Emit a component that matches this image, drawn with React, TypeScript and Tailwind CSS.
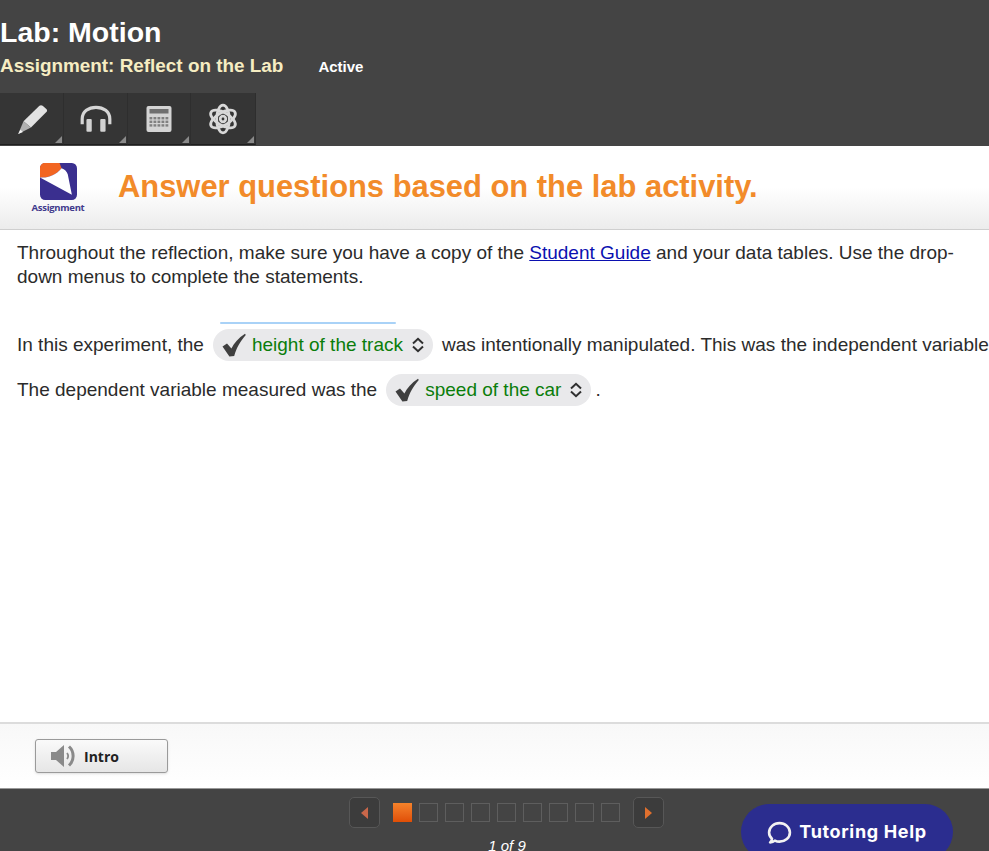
import { ReactNode } from "react";

const sans = "font-['Liberation_Sans',Arial,sans-serif]";

function Check() {
  return (
    <svg viewBox="0 0 24 24" className="w-[24px] h-[24px] shrink-0">
      <path d="M0.5 13.5 L5 10.5 L9.4 15.6 C12 10 16.5 5 23 0.8 L23.8 2 C18 8.5 14.5 15 12.2 23 L7.4 23.4 Z" fill="#3f3f3f" />
    </svg>
  );
}

function Updown() {
  return (
    <svg viewBox="0 0 14 16" className="w-[14px] h-[16px] shrink-0" fill="none" stroke="#2f2f2f" strokeWidth="2">
      <path d="M2 6.5 L7 1.8 L12 6.5" />
      <path d="M2 9.5 L7 14.2 L12 9.5" />
    </svg>
  );
}

function Answer({ children, className }: { children: ReactNode; className: string }) {
  return (
    <span className={`inline-flex items-center h-[32px] rounded-full bg-[#e9e9eb] pl-[9px] ${className}`}>
      <Check />
      <span className="text-[#0a7d0a] ml-[6px] mr-[8px]">{children}</span>
      <Updown />
    </span>
  );
}

function Tool({ children, width }: { children: ReactNode; width: string }) {
  return (
    <div className={`relative h-[52px] flex items-center justify-center bg-[#353535] border-b border-r border-b-[#1f1f1f] border-r-[#2e2e2e] ${width}`}>
      {children}
      <span className="absolute right-[1px] bottom-[1px] w-0 h-0 border-l-[7px] border-l-transparent border-b-[7px] border-b-[#8a8a8a]" />
    </div>
  );
}

function Pencil() {
  return (
    <svg viewBox="0 0 32 32" className="w-[34px] h-[34px]">
      <path d="M8 18 L23 3.5 C24 2.8 25 2.8 26 3.6 L29.5 6.5 C30.4 7.5 30.4 8.6 29.5 9.5 L15 24 Z" fill="#e2e2e2" />
      <path d="M8 18 L15 24 L3 30 Z" fill="#b0b0b0" />
      <path d="M5 26 L7.5 28.2 L3 30 Z" fill="#f4f4f4" />
    </svg>
  );
}

function Headphones() {
  return (
    <svg viewBox="0 0 32 32" className="w-[34px] h-[34px]" fill="none">
      <path d="M3 21 V16 C3 9 9 5 16 5 C23 5 29 9 29 16 V21" stroke="#d6d6d6" strokeWidth="3" />
      <rect x="7" y="16" width="5" height="12" rx="1" fill="#d2d2d2" />
      <rect x="20" y="16" width="5" height="12" rx="1" fill="#d2d2d2" />
    </svg>
  );
}

function Calculator() {
  const cells = [];
  for (let r = 0; r < 3; r++) {
    for (let c = 0; c < 5; c++) {
      cells.push(<rect key={`${r}-${c}`} x={6.5 + c * 4} y={14 + r * 3.6} width="2.8" height="2.4" fill="#808080" />);
    }
  }
  return (
    <svg viewBox="0 0 32 32" className="w-[32px] h-[32px]">
      <rect x="3.5" y="3" width="25" height="26" rx="2" fill="#d4d4d4" />
      <rect x="6.5" y="6" width="19" height="4.5" fill="#6f6f6f" />
      {cells}
    </svg>
  );
}

function Atom() {
  return (
    <svg viewBox="0 0 32 32" className="w-[34px] h-[34px]" fill="none" stroke="#d8d8d8" strokeWidth="2.6">
      <ellipse cx="16" cy="16" rx="13" ry="6" transform="rotate(30 16 16)" />
      <ellipse cx="16" cy="16" rx="13" ry="6" transform="rotate(90 16 16)" />
      <ellipse cx="16" cy="16" rx="13" ry="6" transform="rotate(150 16 16)" />
      <circle cx="16" cy="16" r="2.6" />
    </svg>
  );
}

function AssignmentLogo() {
  return (
    <div className="flex flex-col items-center w-[54px] pt-[2px]">
      <svg viewBox="0 0 36 36" className="w-[37px] h-[37px]">
        <rect width="36" height="36" rx="5" fill="#3a2f8f" />
        <path d="M0 14 V5 C0 2 2 0 5 0 H19 L21 5 C15 12 7 15 0 14 Z" fill="#f26522" />
        <path d="M0 14 C7 15 15 12 21 5 C24 6 26 8 27 11 L31 31 L0 14 Z" fill="#ffffff" />
      </svg>
      <span className="text-[9.5px] leading-[12px] mt-[2px] font-bold text-[#3f3a8c] tracking-[-0.3px] font-['Open_Sans',sans-serif]">
        Assignment
      </span>
    </div>
  );
}

function Speaker() {
  return (
    <svg viewBox="0 0 26 26" className="w-[26px] h-[26px]" fill="none">
      <path d="M1 9 H6 L14 2 V24 L6 17 H1 Z" fill="#8a8a8a" />
      <path d="M17 10 C18.4 11.8 18.4 14.2 17 16" stroke="#8a8a8a" strokeWidth="1.8" />
      <path d="M19 3.5 C24.5 8.5 24.5 17.5 19 22.5" stroke="#8a8a8a" strokeWidth="3" />
    </svg>
  );
}

function NavBtn({ dir }: { dir: "left" | "right" }) {
  return (
    <div className="w-[31px] h-[31px] rounded-[5px] bg-[#3c3c3c] border border-[#575757] flex items-center justify-center">
      {dir === "left" ? (
        <span className="w-0 h-0 border-y-[6px] border-y-transparent border-r-[7px] border-r-[#c9674a]" />
      ) : (
        <span className="w-0 h-0 border-y-[6px] border-y-transparent border-l-[7px] border-l-[#e0702e]" />
      )}
    </div>
  );
}

export default function App() {
  return (
    <div className={`h-[851px] w-[989px] overflow-hidden flex flex-col bg-white ${sans}`}>
      <header className="h-[146px] bg-[#444444] shrink-0 flex flex-col">
        <h1 className="text-[28.5px] leading-[32px] font-bold text-white mt-[16px]">Lab: Motion</h1>
        <div className="flex items-baseline mt-[2px] h-[32px]">
          <span className="text-[18.9px] leading-[32px] font-bold text-[#f6edc2]">Assignment: Reflect on the Lab</span>
          <span className="text-[15px] font-bold text-white ml-[35px]">Active</span>
        </div>
        <div className="flex mt-[11px] w-fit">
          <Tool width="w-[64px]"><Pencil /></Tool>
          <Tool width="w-[64px]"><Headphones /></Tool>
          <Tool width="w-[63px]"><Calculator /></Tool>
          <Tool width="w-[65px]"><Atom /></Tool>
        </div>
      </header>

      <section className="h-[84px] shrink-0 flex items-center bg-gradient-to-b from-white from-50% to-[#ececec] border-b border-[#cfcfcf] pl-[31px]">
        <AssignmentLogo />
        <h2 className="text-[30.9px] font-bold text-[#f28b2a] ml-[33px] leading-none">Answer questions based on the lab activity.</h2>
      </section>

      <main className="flex-1 min-h-0 overflow-hidden px-[17px] text-[19px] leading-[24px] text-[#2b2b2b]">
        <p className="pt-[11px] w-[950px]">
          Throughout the reflection, make sure you have a copy of the{" "}
          <a href="#" className="text-[#0b10b0] underline">Student Guide</a> and your data tables. Use the drop-down menus to complete the statements.
        </p>
        <div className="relative mt-[40px] whitespace-nowrap flex items-center h-[32px]">
          <span className="absolute left-[203px] top-[-7px] w-[176px] h-[2px] rounded-full bg-[#a9d2f7]" />
          <span>In this experiment, the</span>
          <Answer className="ml-[9px] pr-[8px]">height of the track</Answer>
          <span className="ml-[9px]">was intentionally manipulated. This was the independent variable.</span>
        </div>
        <div className="mt-[13px] whitespace-nowrap flex items-center h-[32px]">
          <span>The dependent variable measured was the</span>
          <Answer className="ml-[9px] pr-[8px]">speed of the car</Answer>
          <span className="ml-[4px]">.</span>
        </div>
      </main>

      <section className="h-[66px] shrink-0 bg-gradient-to-b from-[#f8f8f8] to-white border-t-2 border-[#dcdcdc] pl-[35px] pt-[15px]">
        <button className="w-[133px] h-[34px] rounded-[3px] border border-[#9a9a9a] bg-gradient-to-b from-[#fafafa] to-[#e6e6e6] flex items-center pl-[14px] shadow-sm">
          <Speaker />
          <span className="ml-[8px] text-[14px] font-bold text-[#222] font-['Open_Sans',sans-serif]">Intro</span>
        </button>
      </section>

      <footer className="relative h-[63px] shrink-0 bg-[#444444] border-t border-[#999] overflow-hidden">
        <div className="flex items-center pl-[349px] pt-[8px]">
          <NavBtn dir="left" />
          <div className="flex gap-[7px] ml-[13px] mr-[13px]">
            <span className="w-[19px] h-[19px] bg-gradient-to-b from-[#f5822a] to-[#e04e05]" />
            {[1, 2, 3, 4, 5, 6, 7, 8].map((n) => (
              <span key={n} className="w-[19px] h-[19px] border border-[#5e5e5e]" />
            ))}
          </div>
          <NavBtn dir="right" />
        </div>
        <div className="w-[316px] ml-[349px] text-center italic text-[15px] leading-[16px] mt-[10px] text-white">1 of 9</div>
        <div className="absolute left-[741px] top-[15px] w-[212px] h-[56px] rounded-full bg-[#2b2d8f] flex items-start justify-center pt-[16px] text-white">
          <svg viewBox="0 0 24 24" className="w-[25px] h-[25px] mr-[7px]" fill="none" stroke="#f2f2f2" strokeWidth="2.5" strokeLinejoin="round">
            <path d="M3 21.5 C5 21.5 6.5 20.8 7.6 19.8 C9 20.5 10.5 20.8 12 20.8 C17.5 20.8 22 17 22 12 C22 7 17.5 3 12 3 C6.5 3 2 7 2 12 C2 14.5 3 16.5 4.8 18 C4.7 19.3 4 20.6 3 21.5 Z" />
          </svg>
          <span className="text-[18px] leading-[24px] font-bold tracking-[0.65px] font-['Inter',sans-serif]">Tutoring Help</span>
        </div>
      </footer>
    </div>
  );
}
